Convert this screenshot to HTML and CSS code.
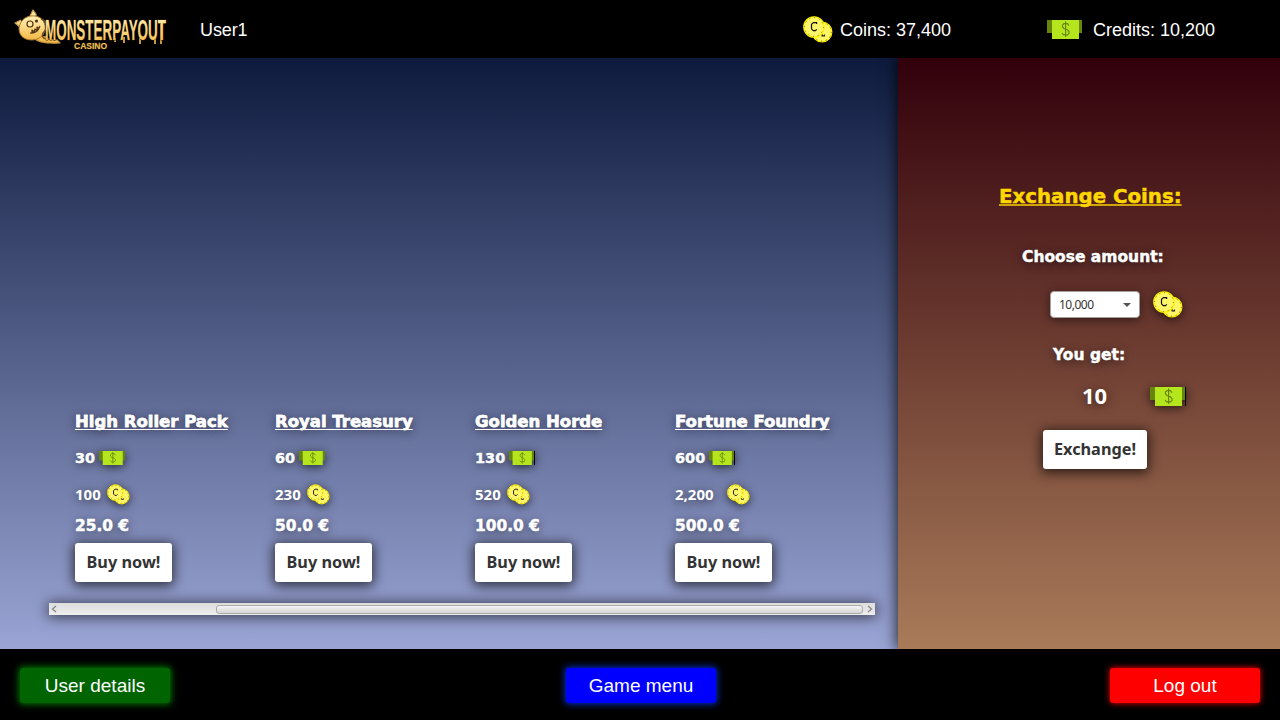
FILE: index.html
```html
<!DOCTYPE html>
<html lang="en">
<head>
<meta charset="utf-8">
<title>Monsterpayout Casino</title>
<link rel="stylesheet" href="styles.css">
</head>
<body>
<svg class="defs" width="0" height="0" aria-hidden="true">
  <defs>
    <symbol id="coins" viewBox="0 0 30 27">
      <circle cx="19" cy="16" r="9.800" fill="#fff568" stroke="#fff200" stroke-width="1.3"/>
      <circle cx="19" cy="16" r="9.200" fill="none" stroke="#6b6500" stroke-width=".9" stroke-dasharray="1 3.8"/>
      <path d="M17 18.500h2v1.400h2.500v-1.400" fill="none" stroke="#222" stroke-width="1.100"/>
      <circle cx="11" cy="11" r="10.200" fill="#fff568" stroke="#fff200" stroke-width="1.300"/>
      <circle cx="11" cy="11" r="9.400" fill="none" stroke="#6b6500" stroke-width=".9" stroke-dasharray="1 3.900"/>
      <path d="M13.600 8V6.600H10.500L8.500 8.300V12.800L10.300 14.700H12.500L13.800 13.400" fill="none" stroke="#111" stroke-width="1.200"/>
    </symbol>
    <symbol id="bill" viewBox="0 0 35 19" preserveAspectRatio="none">
      <path d="M0 0h6v13H0zM31 0h4v13h-4z" fill="#67850d"/>
      <path d="M5 0h27v19H5z" fill="#b5e61d"/>
      <path d="M22 5.800L20.500 3.600H17L15.500 5V7L17 8.500L20.300 9.800L22 11.500V13.400L20.500 14.900H16.600L15 13M18.600 1.500V17" fill="none" stroke="#67850d" stroke-width="1.150"/>
    </symbol>
    <linearGradient id="gold" x1="0" y1="0" x2="0" y2="1">
      <stop offset="0" stop-color="#fff0b5"/><stop offset=".45" stop-color="#fbd987"/><stop offset="1" stop-color="#f5b842"/>
    </linearGradient>
  </defs>
</svg>
<header class="topbar">
  <svg class="logo" width="160" height="46" viewBox="0 0 160 46" role="img" aria-label="Monsterpayout Casino">
    <g stroke-linejoin="round">
      <path d="M7 13L1 16L7 21M16 9L19 3L22 7L22 11M20 31Q25 37 46 36L43 33Q33 34 31 29" fill="url(#gold)" stroke="#c99a45" stroke-width="1.200"/>
      <path d="M5 21C6 12 14 8 21 9C29 10 32 17 31 23C30 31 20 35 12 32C7 30 5 26 5 21Z" fill="url(#gold)" stroke="#a8772d" stroke-width="1"/>
      <path d="M27 12C34 14 34 22 29 26C27 30 31 34 37 31" fill="none" stroke="#6c461b" stroke-width="1.400"/>
      <circle cx="16" cy="17" r="3" fill="#ffe8a0" stroke="#523313" stroke-width="1.200"/>
      <circle cx="22.500" cy="14" r="1.600" fill="#523313"/>
      <path d="M16 26Q23 27 26 19M18 26V23L20 25L21 22L23 24L23 20L25 22" fill="none" stroke="#523313" stroke-width="1.200"/>
    </g>
    <path d="M101 31v4M110 30v6M126 31v6M141 31v6M147 14v23" fill="none" stroke="#dba848" stroke-width="1.800"/>
    <text class="logo-word" transform="translate(31 33) scale(.56 1)" textLength="216" lengthAdjust="spacingAndGlyphs">MONSTERPAYOUT</text>
    <text class="logo-sub" x="60" y="42" textLength="33" lengthAdjust="spacingAndGlyphs">CASINO</text>
  </svg>
  <span class="user">User1</span>
  <div class="balance coins-balance"><svg class="coin-lg"><use href="#coins"/></svg><span>Coins: 37,400</span></div>
  <div class="balance"><svg class="bill-lg"><use href="#bill"/></svg><span>Credits: 10,200</span></div>
</header>
<main class="content">
  <section class="shop">
    <div class="packs">
      <article class="pack">
        <h2 class="heavy pack-name">High Roller Pack</h2>
        <div class="row heavy credits">30<svg class="bill-sm"><use href="#bill"/></svg></div>
        <div class="row coins-row">100<svg class="coin-sm"><use href="#coins"/></svg></div>
        <div class="heavy price">25.0 €</div>
        <button class="action buy">Buy now!</button>
      </article>
      <article class="pack">
        <h2 class="heavy pack-name">Royal Treasury</h2>
        <div class="row heavy credits">60<svg class="bill-sm"><use href="#bill"/></svg></div>
        <div class="row coins-row">230<svg class="coin-sm"><use href="#coins"/></svg></div>
        <div class="heavy price">50.0 €</div>
        <button class="action buy">Buy now!</button>
      </article>
      <article class="pack">
        <h2 class="heavy pack-name">Golden Horde</h2>
        <div class="row heavy credits">130<svg class="bill-sm edged"><use href="#bill"/></svg></div>
        <div class="row coins-row">520<svg class="coin-sm"><use href="#coins"/></svg></div>
        <div class="heavy price">100.0 €</div>
        <button class="action buy">Buy now!</button>
      </article>
      <article class="pack">
        <h2 class="heavy pack-name">Fortune Foundry</h2>
        <div class="row heavy credits">600<svg class="bill-sm edged"><use href="#bill"/></svg></div>
        <div class="row coins-row">2,200<svg class="coin-sm far"><use href="#coins"/></svg></div>
        <div class="heavy price">500.0 €</div>
        <button class="action buy">Buy now!</button>
      </article>
    </div>
    <div class="scrollbar">
      <svg width="12" height="12"><path d="M7 3L3.500 6L7 9" class="arrow"/></svg>
      <div class="thumb"></div>
      <svg width="12" height="12"><path d="M5 3L8.500 6L5 9" class="arrow"/></svg>
    </div>
  </section>
  <section class="exchange">
    <h1 class="heavy exchange-title">Exchange Coins:</h1>
    <div class="heavy choose">Choose amount:</div>
    <div class="amount">
      <div class="select"><span>10,000</span><svg width="8" height="4"><path d="M0 0H8L4 4Z" fill="#555"/></svg></div>
      <svg class="coin-lg"><use href="#coins"/></svg>
    </div>
    <div class="heavy get">You get:</div>
    <div class="result"><span>10</span><svg class="bill-lg edged"><use href="#bill"/></svg></div>
    <button class="action swap">Exchange!</button>
  </section>
</main>
<footer class="bottombar">
  <button class="nav green">User details</button>
  <button class="nav blue">Game menu</button>
  <button class="nav red">Log out</button>
</footer>
</body>
</html>
```
FILE: styles.css
```css
* { box-sizing: border-box; }
body {
  margin: 0;
  width: 1280px;
  height: 720px;
  overflow: hidden;
  display: grid;
  grid-template-rows: 58px 591px 71px;
  background: #000;
  color: #fff;
  font-family: "Liberation Sans", Arial, sans-serif;
}
.defs { position: absolute; }
svg { display: block; flex: none; }
h1, h2 { margin: 0; }
button { border: 0; padding: 0; margin: 0; font-family: inherit; display: block; }

.topbar { display: flex; align-items: center; font-size: 18px; padding: 1px 0 0 14px; }
.logo { margin-top: 1px; overflow: visible; }
.logo-word { font: bold 29px "Liberation Sans Narrow", "Liberation Sans", sans-serif; fill: url(#gold); stroke: #33230e; stroke-width: 1px; paint-order: stroke; }
.logo-sub { font: bold 8.500px "Liberation Sans", sans-serif; fill: #f0c05a; stroke: #33230e; stroke-width: 1px; paint-order: stroke; }
.user { margin-left: 26px; width: 603px; padding-top: 2px; letter-spacing: -.1px; }
.balance { display: flex; align-items: center; white-space: nowrap; }
.balance span { padding-top: 2px; }
.coins-balance { width: 244px; gap: 7px; }
.balance .bill-lg { margin-right: 11px; }
.coin-lg { width: 30px; height: 27px; }
.bill-lg { width: 35px; height: 19px; }
.coin-sm { width: 23px; height: 21px; margin-left: 6px; }
.coin-sm.far { margin-left: 13px; }
.bill-sm { width: 26px; height: 14px; }

.content { display: grid; grid-template-columns: 898px 382px; overflow: hidden; }
.shop { background: linear-gradient(#0d1a3d, #9ba5d5); padding: 350px 23px 0 49px; }
.packs { display: grid; grid-template-columns: repeat(4, 200px); width: 826px; padding-left: 26px; height: 195px; }
.pack { display: grid; grid-template-rows: 27px 45px 28px 35px 39px; align-content: start; }
.heavy { font-family: "DejaVu Sans", Verdana, sans-serif; font-weight: bold; -webkit-text-stroke: .45px currentColor; text-shadow: 0 2px 10px rgba(0, 0, 0, .6); white-space: nowrap; }
.pack-name { font-size: 16.500px; line-height: 27px; }
.pack-name, .exchange-title { text-decoration: underline; text-decoration-thickness: 1px; text-underline-offset: 2px; text-decoration-skip-ink: none; justify-self: start; }
.row { display: flex; align-items: center; }
.credits { font-size: 14.500px; }
.credits svg { margin-left: 4px; }
.coins-row { font: bold 15px "Noto Sans", sans-serif; text-shadow: 0 2px 10px rgba(0, 0, 0, .6); }
.price { font-size: 15.400px; line-height: 36px; }
.row svg, .exchange svg.coin-lg, .exchange svg.bill-lg { filter: drop-shadow(0 2px 5px rgba(0, 0, 0, .65)); }
.edged { border-right: 1px solid #000; }
.bill-lg.edged { width: 36px; }
.action { height: 39px; border-radius: 3px; background: #fff; color: #333; font: bold 16.300px "Noto Sans", sans-serif; padding: 0 0 2px; box-shadow: 0 2px 12px 2px rgba(0, 0, 0, .65); }
.buy { width: 97px; }

.scrollbar { height: 12px; display: flex; align-items: center; justify-content: space-between; background: linear-gradient(#ddd, #eee); box-shadow: 0 1px 14px 1px rgba(0, 0, 0, .65); }
.thumb { width: 647px; height: 9px; margin-left: 155px; border: 1px solid #aaa; border-radius: 3px; background: linear-gradient(#f5f5f5, #d5d5d5); }
.arrow { fill: none; stroke: #888; stroke-width: 1.3; }

.exchange { background: linear-gradient(#32000b, #a97b59); box-shadow: 0 0 14px 1px rgba(0, 0, 0, .8); padding-top: 125px; display: flex; flex-direction: column; align-items: flex-start; }
.exchange-title { font-size: 19.800px; color: #ffd700; text-shadow: none; line-height: 28px; margin-left: 101px; text-decoration-color: #d0a605; text-decoration-thickness: 2px; text-underline-offset: 1px; }
.choose, .get { font-size: 15.500px; line-height: 24px; }
.choose { margin: 34px 0 0 124px; }
.amount { display: flex; align-items: center; margin: 22px 0 0 152px; gap: 13px; height: 27px; }
.select { width: 90px; height: 27px; border: 1px solid #a79e9c; border-radius: 4px; background: #fff; color: #333; font: 12px "Noto Sans", sans-serif; letter-spacing: -.5px; padding: 0 8px; display: flex; align-items: center; justify-content: space-between; box-shadow: 0 2px 10px rgba(0, 0, 0, .5); }
.get { margin: 25px 0 0 155px; }
.result { display: flex; align-items: center; height: 34px; margin: 12px 0 0 184px; font: bold 22px "Noto Sans", sans-serif; text-shadow: 0 2px 10px rgba(0, 0, 0, .5); }
.result span { width: 68px; padding-bottom: 2px; }
.swap { width: 104px; margin: 17px 0 0 145px; }

.bottombar { display: flex; justify-content: space-between; align-items: center; padding: 2px 20px 0; }
.nav { width: 150px; height: 35px; border-radius: 3px; color: #fff; font-size: 19px; line-height: 35px; }
.green { background: #006400; box-shadow: 0 0 7px 1px #008000; }
.blue { background: #00f; box-shadow: 0 0 7px 1px #0030d0; margin-left: 2px; }
.red { background: #f00; box-shadow: 0 0 6px #f00; }
```
